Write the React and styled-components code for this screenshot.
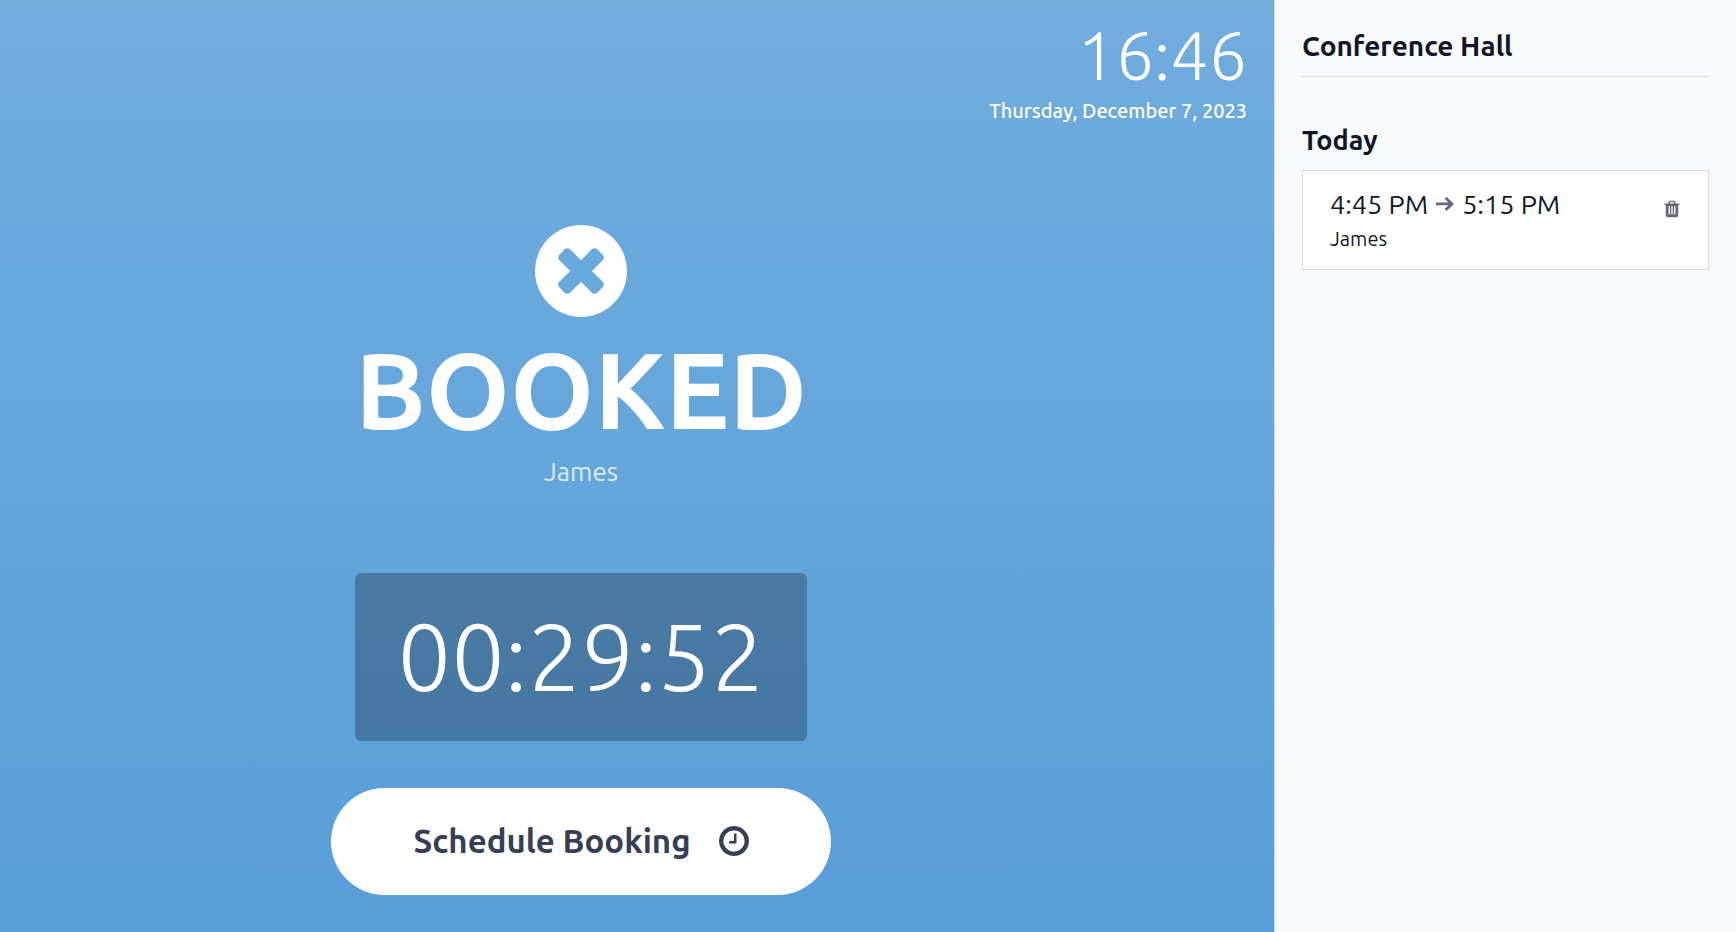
import styled, { createGlobalStyle } from 'styled-components';

const GlobalStyle = createGlobalStyle`
* { box-sizing: border-box; }
body {
    margin: 0;
    font-family: Ubuntu, "Open Sans", "Noto Sans", sans-serif;
    color: #111528;
}
h1, h2, h3, p { margin: 0; }
`;

const Page = styled.div`
display: flex;
min-height: 100vh;
`;

const Status = styled.main`
flex: 1;
display: flex;
flex-direction: column;
color: white;
background: linear-gradient(#71ADDD, #589ED8);
`;

const Clock = styled.header`
display: flex;
flex-direction: column;
align-items: flex-end;
padding: 20px 27px 0;

.time {
    font-size: 68px;
    font-weight: 300;
    line-height: 70px;
}
.date {
    font-size: 20px;
    font-weight: 500;
    line-height: 28px;
    margin-top: 7px;
}
`;

const Booking = styled.section`
flex: 1;
display: flex;
flex-direction: column;
align-items: center;
justify-content: flex-end;
padding: 0 112px 37px 0;
`;

const StatusTitle = styled.h1`
font-size: 107px;
font-weight: 600;
line-height: 120px;
margin-top: 12px;
`;

const Organizer = styled.p`
margin-top: 5px;
font-size: 26px;
line-height: 36px;
opacity: .8;
`;

const Countdown = styled.div`
width: 452px;
margin: 83px 0 47px;
padding-bottom: 2px;
border-radius: 6px;
background-color: rgba(0, 0, 0, .25);
font-size: 95px;
font-weight: 300;
line-height: 166px;
text-align: center;
`;

const ScheduleButton = styled.button`
display: flex;
align-items: center;
justify-content: center;
gap: 28px;
width: 500px;
height: 107px;
padding: 0 0 2px;
border: 0;
border-radius: 54px;
background-color: white;
color: #383E53;
font-family: inherit;
font-size: 33px;
font-weight: 600;
cursor: pointer;
`;

const Sidebar = styled.aside`
flex: 0 0 462px;
padding: 27px;
border-left: 1px solid #D8DADD;
background-color: #F9FAFB;
`;

const RoomName = styled.h2`
padding-bottom: 11px;
border-bottom: 1px solid #D8DADD;
font-size: 28px;
font-weight: 600;
line-height: 38px;
`;

const DayTitle = styled.h3`
margin: 44px 0 10px;
font-size: 27px;
font-weight: 600;
line-height: 39px;
`;

const Card = styled.article`
display: flex;
justify-content: space-between;
align-items: flex-start;
padding: 14px 27px;
border: 1px solid #D8DADD;
background-color: white;

.range {
    display: flex;
    align-items: center;
    gap: 8px;
    font-size: 27px;
    line-height: 38px;
}
.organizer {
    font-size: 20px;
    line-height: 32px;
}
`;

const DeleteButton = styled.button`
display: flex;
margin-top: 15px;
padding: 0;
border: 0;
background: none;
color: #666878;
cursor: pointer;
`;

const Icon = styled.svg`
display: block;
flex: none;
width: ${(p) => p.$size}px;
height: ${(p) => p.$size}px;
fill: ${(p) => p.$color || "currentColor"};
`;

const paths = {
    times: "M1149 994q0-26-19-45l-181-181 181-181q19-19 19-45 0-27-19-46l-90-90q-19-19-46-19-26 0-45 19l-181 181-181-181q-19-19-45-19-27 0-46 19l-90 90q-19 19-19 46 0 26 19 45l181 181-181 181q-19 19-19 45 0 27 19 46l90 90q19 19 46 19 26 0 45-19l181-181 181 181q19 19 45 19 27 0 46-19l90-90q19-19 19-46zm387-226q0 209-103 385.5t-279.5 279.5-385.5 103-385.5-103-279.5-279.5-103-385.5 103-385.5 279.5-279.5 385.5-103 385.5 103 279.5 279.5 103 385.5z",
    clock: "M896 416v448q0 14-9 23t-23 9h-320q-14 0-23-9t-9-23v-64q0-14 9-23t23-9h224v-352q0-14 9-23t23-9h64q14 0 23 9t9 23zm416 352q0-148-73-273t-198-198-273-73-273 73-198 198-73 273 73 273 198 198 273 73 273-73 198-198 73-273zm224 0q0 209-103 385.5t-279.5 279.5-385.5 103-385.5-103-279.5-279.5-103-385.5 103-385.5 279.5-279.5 385.5-103 385.5 103 279.5 279.5 103 385.5z",
    trash: "M704 1376v-704q0-14-9-23t-23-9h-64q-14 0-23 9t-9 23v704q0 14 9 23t23 9h64q14 0 23-9t9-23zm256 0v-704q0-14-9-23t-23-9h-64q-14 0-23 9t-9 23v704q0 14 9 23t23 9h64q14 0 23-9t9-23zm256 0v-704q0-14-9-23t-23-9h-64q-14 0-23 9t-9 23v704q0 14 9 23t23 9h64q14 0 23-9t9-23zm-544-992h448l-48-117q-7-9-17-11h-317q-10 2-17 11zm928 32v64q0 14-9 23t-23 9h-96v948q0 83-47 143.5t-113 60.5h-832q-66 0-113-58.5t-47-141.5v-952h-96q-14 0-23-9t-9-23v-64q0-14 9-23t23-9h309l70-167q15-37 54-63t79-26h320q40 0 79 26t54 63l70 167h309q14 0 23 9t9 23z",
};

const bookings = [
    { start: "4:45 PM", end: "5:15 PM", organizer: "James" },
];

function BookingCard(props) {
    const { start, end, organizer } = props;

    return (
        <Card>
            <div>
                <div className="range">
                    <span>{start}</span>
                    <Icon $size={18} $color="#666878" viewBox="0 0 18 18" aria-hidden="true">
                        <path d="M0 7.5h12.4L8.6 3.7l2-2L18 8.9l-7.4 7.2-2-2 3.8-3.8H0z" />
                    </Icon>
                    <span>{end}</span>
                </div>
                <div className="organizer">{organizer}</div>
            </div>
            <DeleteButton type="button" aria-label="Delete booking">
                <Icon $size={18} viewBox="128 64 1536 1664" aria-hidden="true"><path d={paths.trash} /></Icon>
            </DeleteButton>
        </Card>
    );
}

function App() {
    return (
        <Page>
            <GlobalStyle />
            <Status>
                <Clock>
                    <div className="time">16:46</div>
                    <div className="date">Thursday, December 7, 2023</div>
                </Clock>
                <Booking>
                    <Icon $size={92} viewBox="0 0 1536 1536" aria-hidden="true"><path d={paths.times} /></Icon>
                    <StatusTitle>BOOKED</StatusTitle>
                    <Organizer>James</Organizer>
                    <Countdown>00:29:52</Countdown>
                    <ScheduleButton type="button">
                        Schedule Booking
                        <Icon $size={30} viewBox="0 0 1536 1536" aria-hidden="true"><path d={paths.clock} /></Icon>
                    </ScheduleButton>
                </Booking>
            </Status>
            <Sidebar>
                <RoomName>Conference Hall</RoomName>
                <DayTitle>Today</DayTitle>
                {bookings.map((b, i) => <BookingCard key={i} {...b} />)}
            </Sidebar>
        </Page>
    );
}

export default App;
